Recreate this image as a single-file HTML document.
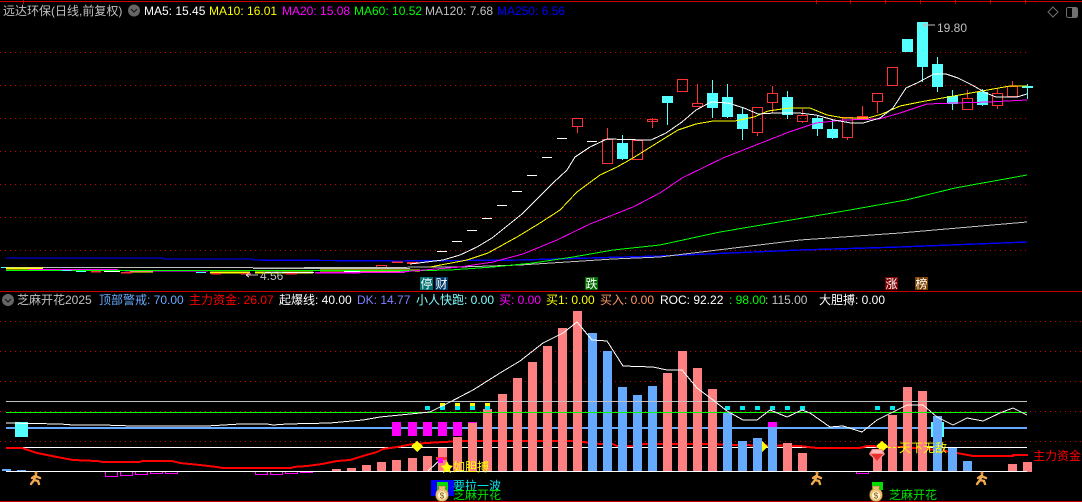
<!DOCTYPE html>
<html><head><meta charset="utf-8"><style>
html,body{margin:0;padding:0;background:#000;width:1082px;height:502px;overflow:hidden}
#r{position:relative;width:1082px;height:502px;overflow:hidden;background:#000}
svg{position:absolute;left:0;top:0}
.t{position:absolute;white-space:pre;font:12px/14px "Liberation Sans","WenQuanYi Zen Hei","Noto Sans CJK SC",sans-serif}
.b{position:absolute;width:13px;height:13px;top:277px;color:#fff;font:12px/13px "WenQuanYi Zen Hei","Noto Sans CJK SC",sans-serif;text-align:center}
</style></head><body><div id="r">
<svg width="1082" height="502" viewBox="0 0 1082 502" shape-rendering="crispEdges" fill="none">
<!-- frame -->
<path d="M0 1.5H1082M0 291.5H1082M0 501.5H1082" stroke="#cc0000"/>
<path d="M23.5 0V4M816.5 0V4M850.5 0V4M885.5 0V4M920.5 0V4M955.5 0V4M990.5 0V4M1025.5 0V4" stroke="#cc0000"/>
<!-- dotted top -->
<path d="M0 52.5H1030M0 85.5H1030M0 118.5H1030M0 151.5H1030M0 184.5H1030M0 217.5H1030M0 250.5H1030" stroke="#c80000" stroke-dasharray="1 4"/>
<!-- dotted lower -->
<path d="M0 321.5H1082M0 351.5H1082M0 381.5H1082M0 411.5H1082M0 441.5H1082" stroke="#c80000" stroke-dasharray="1 4"/>
<!-- white dojis -->
<path d="M437 251.5H447M452 241.5H462M467 230.5H477M482 218.5H492M497 205.5H507M512 191.5H522M527 175.5H537M542 157.5H552M557 138.5H567M587 141.5H597" stroke="#fff"/>
<!-- red candles -->
<g stroke="#ff3232">
<rect x="572.5" y="118.5" width="10" height="8"/><path d="M577.5 127V133"/>
<rect x="602.5" y="139.5" width="10" height="24"/><path d="M607.5 128V139"/>
<rect x="632.5" y="140.5" width="10" height="19"/>
<rect x="647.5" y="119.5" width="10" height="2"/><path d="M652.5 118V128"/>
<rect x="677.5" y="79.5" width="10" height="12"/>
<rect x="692.5" y="103.5" width="10" height="3"/><path d="M697.5 84V103"/>
<rect x="752.5" y="107.5" width="10" height="25"/><path d="M757.5 133V136"/>
<rect x="767.5" y="93.5" width="10" height="9"/><path d="M772.5 86V93M772.5 103V113"/>
<rect x="797.5" y="115.5" width="10" height="6"/><path d="M802.5 109V115M802.5 122V123"/>
<rect x="842.5" y="117.5" width="10" height="20"/><path d="M847.5 138V140"/>
<path d="M862.5 106V116"/><rect x="857" y="116" width="11" height="3" fill="#ff3232" stroke="none"/>
<rect x="872.5" y="93.5" width="10" height="8"/><path d="M877.5 102V113"/>
<rect x="887.5" y="67.5" width="10" height="18"/>
<rect x="962.5" y="98.5" width="10" height="11"/><path d="M967.5 90V98"/>
<rect x="992.5" y="93.5" width="10" height="12"/><path d="M997.5 88V93M997.5 106V109"/>
<rect x="1007.5" y="86.5" width="10" height="10"/><path d="M1012.5 81V86"/>
<rect x="392" y="261" width="11" height="2" fill="#ff3232" stroke="none"/>
<rect x="407" y="262" width="11" height="2" fill="#ff3232" stroke="none"/>
<rect x="376.5" y="265.5" width="10" height="3"/>
</g>
<!-- cyan candles -->
<g stroke="#54ffff">
<path d="M622.5 135V160M667.5 96V125M712.5 80V118M727.5 84V118M742.5 108V140M787.5 91V119M817.5 115V136M832.5 120V139M922.5 22V82M937.5 57V92M952.5 90V110M982.5 89V106M1027.5 84V99"/>
</g>
<g fill="#54ffff">
<rect x="617" y="143" width="11" height="16"/><rect x="662" y="96" width="11" height="7"/>
<rect x="707" y="93" width="11" height="15"/><rect x="722" y="97" width="11" height="20"/>
<rect x="737" y="114" width="11" height="15"/><rect x="782" y="97" width="11" height="18"/>
<rect x="812" y="118" width="11" height="11"/><rect x="827" y="129" width="11" height="9"/>
<rect x="902" y="39" width="11" height="13"/><rect x="917" y="22" width="11" height="45"/>
<rect x="932" y="64" width="11" height="23"/><rect x="947" y="96" width="11" height="8"/>
<rect x="977" y="92" width="11" height="13"/><rect x="1022" y="86" width="11" height="2"/>
</g>
<!-- low left flat segments -->
<path d="M1 267.5H6" stroke="#54ffff"/>
<path d="M6 267.5H253M253 268.5H410" stroke="#c0c0c0"/>
<path d="M6 268.5H43M130 271.5H153M210 272.5H250M255 272.5H313M320 270.5H420" stroke="#ffff00" stroke-width="2"/>
<path d="M29 269.5H118M125 270.5H208M315 272.5H360M360 272H405" stroke="#ff00ff" stroke-width="1.5"/>
<path d="M6 270.5H430" stroke="#00ff00"/>
<path d="M62 270.5H72M76 271.5H86M196 272.5H206" stroke="#54ffff"/>
<path d="M91 271.5H101M121 272.5H132M211 273.5H221M241 273.5H251M286 273.5H297" stroke="#ff3232" stroke-width="1.5"/>
<path d="M104 271.5H120M265 272.5H314M344 271.5H360" stroke="#fff"/>
<!-- MA -->
<polyline stroke="#0000ff" stroke-width="1.4" points="6,258 163,258 163,259 253,259 253,260 400,261 520,260 660,256 800,250 900,247 1027,242"/>
<polyline stroke="#c0c0c0" points="253,268 460,267 520,265 567,262 613,259 660,257 800,240 900,233 1027,222"/>
<polyline stroke="#00ff00" points="400,271 450,270 493,267 533,263 573,257 613,250 660,245 720,232 850,210 906,200 955,188 1027,175"/>
<polyline stroke="#ff00ff" points="400,272 460,267 493,262 523,254 557,240 590,224 633,207 660,193 682,178 723,158 761,143 789,132 816,123 844,120 879,119 900,113 927,104 955,103 989,102 1027,100"/>
<polyline stroke="#ffff00" points="430,267 467,260 488,253 517,237 540,223 560,210 577,192 600,175 617,167 633,158 657,143 678,130 696,124 713,121 735,121 754,117 768,111 789,108 810,108 827,115 844,118 868,118 882,114 900,106 920,102 948,97 982,91 1010,86 1027,86"/>
<polyline stroke="#fff" points="410,264 443,260 460,255 477,247 492,238 507,226 522,214 537,199 553,183 567,170 575,157 590,147 607,139 645,140 651,140 666,133 682,122 696,110 711,102 728,103 744,108 758,114 775,113 799,113 816,115 834,120 851,123 863,123 880,118 893,108 906,88 917,83 934,74 946,74 958,78 972,85 986,93 996,97 1017,97 1027,94"/>
<!-- 19.80 marker -->
<path d="M923 25H935M923 25L926 23M923 25L926 27" stroke="#c0c0c0"/>
<path d="M246 275H258M246 275L249 273M246 275L249 277" stroke="#c0c0c0"/>
<!-- top-right icons -->
<path d="M1053 7L1058 12L1053 17L1048 12Z" stroke="#707070" shape-rendering="auto"/>
<rect x="1066.5" y="7.5" width="11" height="10" rx="2" stroke="#707070"/><rect x="1072" y="8" width="5" height="9" fill="#707070"/>
<circle cx="134" cy="10.5" r="6" fill="#666" shape-rendering="auto"/>
<path d="M131 9L134 12L137 9" stroke="#111" shape-rendering="auto"/>
<circle cx="8" cy="300" r="6" fill="#666" shape-rendering="auto"/>
<path d="M5 299L8 302L11 299" stroke="#111" shape-rendering="auto"/>

<!-- LOWER PANEL: under bars -->
<path d="M6 428H1027" stroke="#66aaff" stroke-width="2"/>
<path d="M6 447.5H1027" stroke="#fff"/>
<polyline stroke="#ff0000" stroke-width="2" points="6,448 22,448 37,453 57,457 73,460 97,461 103,462 140,462 142,461 172,461 180,463 200,465 217,467 223,468 292,468 293,467 307,466 322,464 337,461 350,460 363,456 377,452 383,449 397,447 413,444 427,443 443,442 463,441 573,441 583,442 600,444 613,444 617,446 640,446 643,444 713,444 733,445 800,446 817,448 860,448 867,446 900,447 940,450 957,453 973,456 1013,456 1013,455 1028,455"/>
<rect x="15" y="422" width="13" height="15" fill="#54ffff"/>
<rect x="931" y="422" width="13" height="15" fill="#54ffff"/>
<!-- blue bars -->
<g fill="#66aaff">
<rect x="2" y="469" width="9" height="2"/><rect x="17" y="470" width="9" height="1"/>
<rect x="588" y="333" width="9" height="138"/><rect x="603" y="351" width="9" height="120"/>
<rect x="618" y="387" width="9" height="84"/><rect x="633" y="395" width="9" height="76"/>
<rect x="648" y="386" width="9" height="85"/><rect x="723" y="413" width="9" height="58"/>
<rect x="738" y="441" width="9" height="30"/><rect x="753" y="438" width="9" height="33"/>
<rect x="768" y="427" width="9" height="44"/><rect x="933" y="416" width="9" height="55"/>
<rect x="948" y="448" width="9" height="23"/><rect x="963" y="461" width="9" height="10"/>
</g>
<!-- pink bars -->
<g fill="#ff8080">
<rect x="332" y="469" width="9" height="2"/><rect x="347" y="468" width="9" height="3"/>
<rect x="362" y="465" width="9" height="6"/><rect x="377" y="462" width="9" height="9"/>
<rect x="392" y="460" width="9" height="11"/><rect x="408" y="458" width="9" height="13"/>
<rect x="423" y="456" width="9" height="15"/><rect x="438" y="448" width="9" height="23"/>
<rect x="453" y="437" width="9" height="34"/><rect x="468" y="422" width="9" height="49"/>
<rect x="483" y="409" width="9" height="62"/><rect x="498" y="394" width="9" height="77"/>
<rect x="513" y="378" width="9" height="93"/><rect x="528" y="362" width="9" height="109"/>
<rect x="543" y="346" width="9" height="125"/><rect x="558" y="328" width="9" height="143"/>
<rect x="573" y="311" width="9" height="160"/>
<rect x="663" y="373" width="9" height="98"/><rect x="678" y="351" width="9" height="120"/>
<rect x="693" y="368" width="9" height="103"/><rect x="708" y="389" width="9" height="82"/>
<rect x="783" y="443" width="9" height="28"/><rect x="798" y="453" width="9" height="18"/>
<rect x="873" y="455" width="9" height="16"/><rect x="888" y="415" width="9" height="56"/>
<rect x="903" y="387" width="9" height="84"/><rect x="918" y="391" width="9" height="80"/>
<rect x="1008" y="464" width="9" height="8"/><rect x="1023" y="462" width="9" height="10"/>
</g>
<!-- magenta -->
<g fill="#ff00ff">
<rect x="392" y="422" width="9" height="14"/><rect x="408" y="422" width="9" height="14"/>
<rect x="423" y="422" width="9" height="14"/><rect x="438" y="422" width="9" height="14"/>
<rect x="453" y="422" width="9" height="14"/><rect x="468" y="422" width="9" height="1"/>
<rect x="768" y="422" width="9" height="5"/><rect x="300" y="472" width="13" height="1"/>
</g>
<g stroke="#ff00ff">
<path d="M105.500 471V476.500H117.500V471M120.500 471V475.500H132.500V471M135.500 471V474.500H147.500V471M150.500 471V473.500H162.500V471M165.500 471V473.500H177.500V471M255.500 471V474.500H267.500V471M270.500 471V474.500H282.500V471M285.500 471V473.500H297.500V471M856.500 471V473.500H868.500V471"/>
</g>
<!-- axis + over lines -->
<path d="M6 471.500H1027" stroke="#fff"/>
<path d="M6 401.500H1027" stroke="#c0c0c0"/>
<path d="M6 412.500H1027" stroke="#00ff00"/>
<!-- small cyan squares -->
<g fill="#00e8f0">
<rect x="425" y="406" width="5" height="4"/><rect x="440" y="406" width="5" height="4"/>
<rect x="455" y="406" width="5" height="4"/><rect x="470" y="406" width="5" height="4"/>
<rect x="485" y="406" width="5" height="4"/><rect x="725" y="406" width="5" height="4"/>
<rect x="740" y="406" width="5" height="4"/><rect x="755" y="406" width="5" height="4"/>
<rect x="770" y="406" width="5" height="4"/><rect x="785" y="406" width="5" height="4"/>
<rect x="800" y="406" width="5" height="4"/><rect x="875" y="406" width="5" height="4"/>
<rect x="890" y="406" width="5" height="4"/>
</g>
<g fill="#ffff00"><rect x="440" y="403" width="5" height="3"/><rect x="455" y="403" width="5" height="3"/><rect x="470" y="403" width="5" height="3"/><rect x="485" y="403" width="5" height="3"/></g>
<!-- white oscillator -->
<polyline stroke="#fff" points="6,423 60,424 73,425 103,425 133,426 167,426 207,426 240,424 267,424 273,425 287,424 330,423 363,420 380,417 400,415 420,413 430,412 450,402 473,390 500,373 520,361 543,343 563,333 577,322 592,340 607,341 623,366 653,367 667,370 682,370 697,388 713,400 727,411 743,420 757,420 770,410 787,417 802,410 810,413 830,427 843,426 862,432 877,420 893,412 907,405 923,405 937,417 953,425 967,418 983,421 1000,413 1013,408 1027,415"/>
<path d="M428 471L442 458" stroke="#fff"/>
<!-- diamonds, triangle, star -->
<path d="M417 441L423 446L417 452L411 446Z" fill="#ffff00"/>
<path d="M882 441L888 446L882 452L876 446Z" fill="#ffff00"/>
<path d="M762 441L768 446.500L762 452Z" fill="#ffff00"/>
<path d="M888 447.500H900" stroke="#ffff00" stroke-dasharray="3 2"/>
<path d="M436 457H447V460H436Z" fill="#ff3232"/><rect x="438" y="458" width="5" height="5" fill="#ff00ff"/>
<path d="M447 461L449 465L453 466L450 469L451 473L447 471L443 473L444 469L441 466L445 465Z" fill="#ffff00" shape-rendering="auto"/>
<!-- gem -->
<path d="M872 449H882L885 454L877 462L869 454Z" fill="#ff8a8a" shape-rendering="auto"/>
<path d="M871 454H883L877 461Z" fill="#e83030" shape-rendering="auto"/>
<path d="M873 450H881L883 453H871Z" fill="#ffc0c0" shape-rendering="auto"/>
<!-- runners -->
<g stroke="#f0a850" stroke-width="2.4" shape-rendering="auto" stroke-linecap="round">
<g><circle cx="36" cy="473" r="1.500" fill="#e09030" stroke="none"/><path d="M36 475L34 480L31 484M34 480L38 481L39 484M35 476L40 478M35 476L32 478"/></g>
<g transform="translate(781,0)"><circle cx="36" cy="473" r="1.500" fill="#e09030" stroke="none"/><path d="M36 475L34 480L31 484M34 480L38 481L39 484M35 476L40 478M35 476L32 478"/></g>
<g transform="translate(946,0)"><circle cx="36" cy="473" r="1.500" fill="#e09030" stroke="none"/><path d="M36 475L34 480L31 484M34 480L38 481L39 484M35 476L40 478M35 476L32 478"/></g>
</g>
<!-- bag left -->
<rect x="431" y="480" width="23" height="16" fill="#0000ff"/><rect x="437" y="482" width="11" height="14" fill="#00e000"/>
<!-- bag right -->
<rect x="872" y="482" width="11" height="8" fill="#00e000"/>
<g shape-rendering="auto">
<path d="M438 486H446L445 489C450 491 450 501.500 442 501.500C434 501.500 434 491 439 489Z" fill="#e8c070" stroke="#8a6a20" stroke-width=".6"/>
<circle cx="442" cy="495.500" r="4.200" fill="#fff3d0"/>
<path d="M872 486H880L879 489C884 491 884 501.500 876 501.500C868 501.500 868 491 873 489Z" fill="#e8c070" stroke="#8a6a20" stroke-width=".6"/>
<circle cx="876" cy="495.500" r="4.200" fill="#fff3d0"/>
</g>
<text x="442" y="498.500" font-size="8" fill="#7a4a00" text-anchor="middle" font-family="Liberation Sans">$</text>
<text x="876" y="498.500" font-size="8" fill="#7a4a00" text-anchor="middle" font-family="Liberation Sans">$</text>
</svg>

<!-- header -->
<div class="t" style="left:3px;top:4px;color:#c0c0c0">远达环保(日线,前复权)</div>
<div class="t" style="left:144px;top:4px;color:#fff">MA5: 15.45</div>
<div class="t" style="left:209px;top:4px;color:#ff0">MA10: 16.01</div>
<div class="t" style="left:282px;top:4px;color:#f0f">MA20: 15.08</div>
<div class="t" style="left:354px;top:4px;color:#0f0">MA60: 10.52</div>
<div class="t" style="left:425px;top:4px;color:#c0c0c0">MA120: 7.68</div>
<div class="t" style="left:497px;top:4px;color:#00f">MA250: 6.56</div>
<div class="t" style="left:937px;top:21px;color:#c0c0c0">19.80</div>
<div class="t" style="left:260px;top:269px;color:#c0c0c0">4.56</div>
<!-- flags -->
<div class="b" style="left:420px;background:#007070">停</div>
<div class="b" style="left:435px;background:#003a6a">财</div>
<div class="b" style="left:585px;background:#006a00">跌</div>
<div class="b" style="left:885px;background:#800000">涨</div>
<div class="b" style="left:915px;background:#7a4000">榜</div>
<!-- lower header -->
<div class="t" style="left:17px;top:293px;color:#c0c0c0">芝麻开花2025</div>
<div class="t" style="left:99px;top:293px;color:#66aaff">顶部警戒: 70.00</div>
<div class="t" style="left:189px;top:293px;color:#f00">主力资金: 26.07</div>
<div class="t" style="left:279px;top:293px;color:#fff">起爆线: 40.00</div>
<div class="t" style="left:357px;top:293px;color:#8080ff">DK: 14.77</div>
<div class="t" style="left:416px;top:293px;color:#80ffff">小人快跑: 0.00</div>
<div class="t" style="left:499px;top:293px;color:#f0f">买: 0.00</div>
<div class="t" style="left:546px;top:293px;color:#ff0">买1: 0.00</div>
<div class="t" style="left:600px;top:293px;color:#ff9966">买入: 0.00</div>
<div class="t" style="left:660px;top:293px;color:#fff">ROC: 92.22</div>
<div class="t" style="left:729px;top:293px;color:#0f0">: 98.00</div>
<div class="t" style="left:765px;top:293px;color:#c0c0c0">: 115.00</div>
<div class="t" style="left:819px;top:293px;color:#fff">大胆搏: 0.00</div>
<!-- annotations -->
<div class="t" style="left:453px;top:460px;color:#ff0">如胆搏</div>
<div class="t" style="left:453px;top:479px;color:#00e8f0">要拉一波</div>
<div class="t" style="left:453px;top:488px;color:#00e000">芝麻开花</div>
<div class="t" style="left:899px;top:441px;color:#ff0">天下无敌</div>
<div class="t" style="left:1033px;top:449px;color:#f00">主力资金</div>
<div class="t" style="left:889px;top:488px;color:#00e000">芝麻开花</div>
</div></body></html>
